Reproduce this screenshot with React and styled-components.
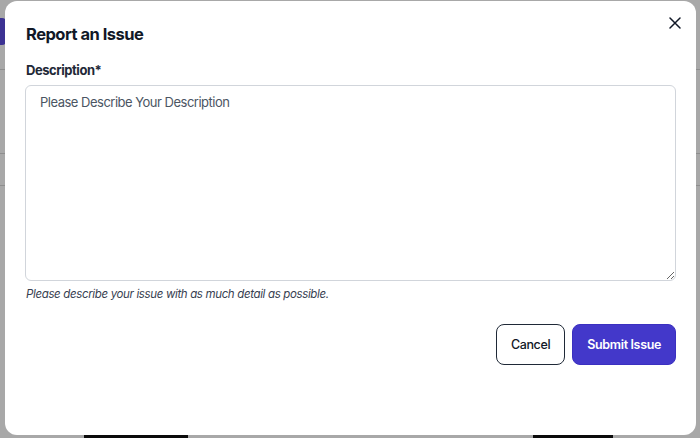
import styled, { createGlobalStyle } from 'styled-components';

const Global = createGlobalStyle`
  html, body {
    margin: 0;
    padding: 0;
    background: #fff;
    font-family: Inter, "Noto Sans", "Liberation Sans", sans-serif;
  }
  * { box-sizing: border-box; }
`;

const Page = styled.div`
  position: relative;
  width: 700px;
  height: 438px;
  overflow: hidden;
  display: flex;
  flex-direction: column;
  background: #fff;
`;
const PageHeader = styled.div`
  display: flex;
  height: 70px;
  padding-top: 18px;
  align-items: flex-start;
  border-bottom: 1px solid #d8d8d8;
`;
const PageButton = styled.div`
  width: 40px;
  height: 27px;
  margin-left: -34px;
  background: #5b4ce0;
  border-radius: 4px;
`;
const PageRule = styled.div`
  height: ${p => p.$h}px;
  border-bottom: 1px solid #d8d8d8;
`;
const PageFooter = styled.div`
  margin-top: auto;
  display: flex;
  height: 4px;
  padding-left: 84px;
  gap: 345px;
`;
const DarkTab = styled.div`
  width: ${p => p.$w}px;
  background: #111;
`;

const Overlay = styled.div`
  position: absolute;
  inset: 0;
  background: rgba(0, 0, 0, 0.34);
  display: flex;
  align-items: flex-start;
  padding: 1px 4px 0 5px;
`;
const Modal = styled.div`
  position: relative;
  width: 691px;
  height: 434px;
  background: #fff;
  border-radius: 12px;
  padding: 21px 20px 20px 20px;
  display: flex;
  flex-direction: column;
`;
const Title = styled.h2`
  margin: 0 0 0 1px;
  font-size: 16.5px;
  line-height: 24px;
  font-weight: 700;
  letter-spacing: -0.5px;
  color: #111827;
`;
const CloseButton = styled.button`
  position: absolute;
  top: 12px;
  right: 11px;
  width: 20px;
  height: 20px;
  padding: 0;
  border: none;
  background: transparent;
  display: flex;
  align-items: center;
  justify-content: center;
  cursor: pointer;
`;
const Label = styled.label`
  margin: 15px 0 0 1px;
  font-size: 13px;
  line-height: 18px;
  font-weight: 700;
  letter-spacing: -0.45px;
  color: #1f2937;
`;
const TextArea = styled.textarea`
  margin-top: 6px;
  width: 100%;
  height: 196px;
  resize: vertical;
  border: 1px solid #d1d5db;
  border-radius: 6px;
  padding: 7px 14px;
  font-family: inherit;
  font-size: 13px;
  line-height: 18px;
  letter-spacing: -0.5px;
  color: #111827;
  outline: none;
  &::placeholder {
    color: #4b5563;
  }
`;
const Hint = styled.p`
  margin: 5px 0 0 1px;
  font-size: 11.5px;
  line-height: 16px;
  font-style: italic;
  letter-spacing: -0.35px;
  color: #374151;
`;
const Actions = styled.div`
  display: flex;
  justify-content: flex-end;
  gap: 7px;
  margin-top: 22px;
`;
const Button = styled.button`
  height: 41px;
  padding: 0 14px;
  border-radius: 8px;
  font-family: inherit;
  font-size: 12.5px;
  font-weight: ${p => (p.$primary ? 600 : 500)};
  letter-spacing: -0.35px;
  cursor: pointer;
  border: 1px solid ${p => (p.$primary ? '#3b30c0' : '#1f2937')};
  background: ${p => (p.$primary ? '#4338ca' : '#fff')};
  color: ${p => (p.$primary ? '#fff' : '#111827')};
`;

const CloseIcon = () => (
  <svg width="12" height="12" viewBox="0 0 12 12" fill="none" stroke="#111827" strokeWidth="1.5" strokeLinecap="round">
    <path d="M1 1 L11 11 M11 1 L1 11" />
  </svg>
);

export default function App() {
  return (
    <>
      <Global />
      <Page>
        <PageHeader>
          <PageButton />
        </PageHeader>
        <PageRule $h={84} />
        <PageRule $h={32} />
        <PageFooter>
          <DarkTab $w={104} />
          <DarkTab $w={80} />
        </PageFooter>
        <Overlay>
          <Modal role="dialog">
            <Title>Report an Issue</Title>
            <CloseButton aria-label="Close">
              <CloseIcon />
            </CloseButton>
            <Label htmlFor="desc">Description*</Label>
            <TextArea id="desc" placeholder="Please Describe Your Description" />
            <Hint>Please describe your issue with as much detail as possible.</Hint>
            <Actions>
              <Button>Cancel</Button>
              <Button $primary>Submit Issue</Button>
            </Actions>
          </Modal>
        </Overlay>
      </Page>
    </>
  );
}
